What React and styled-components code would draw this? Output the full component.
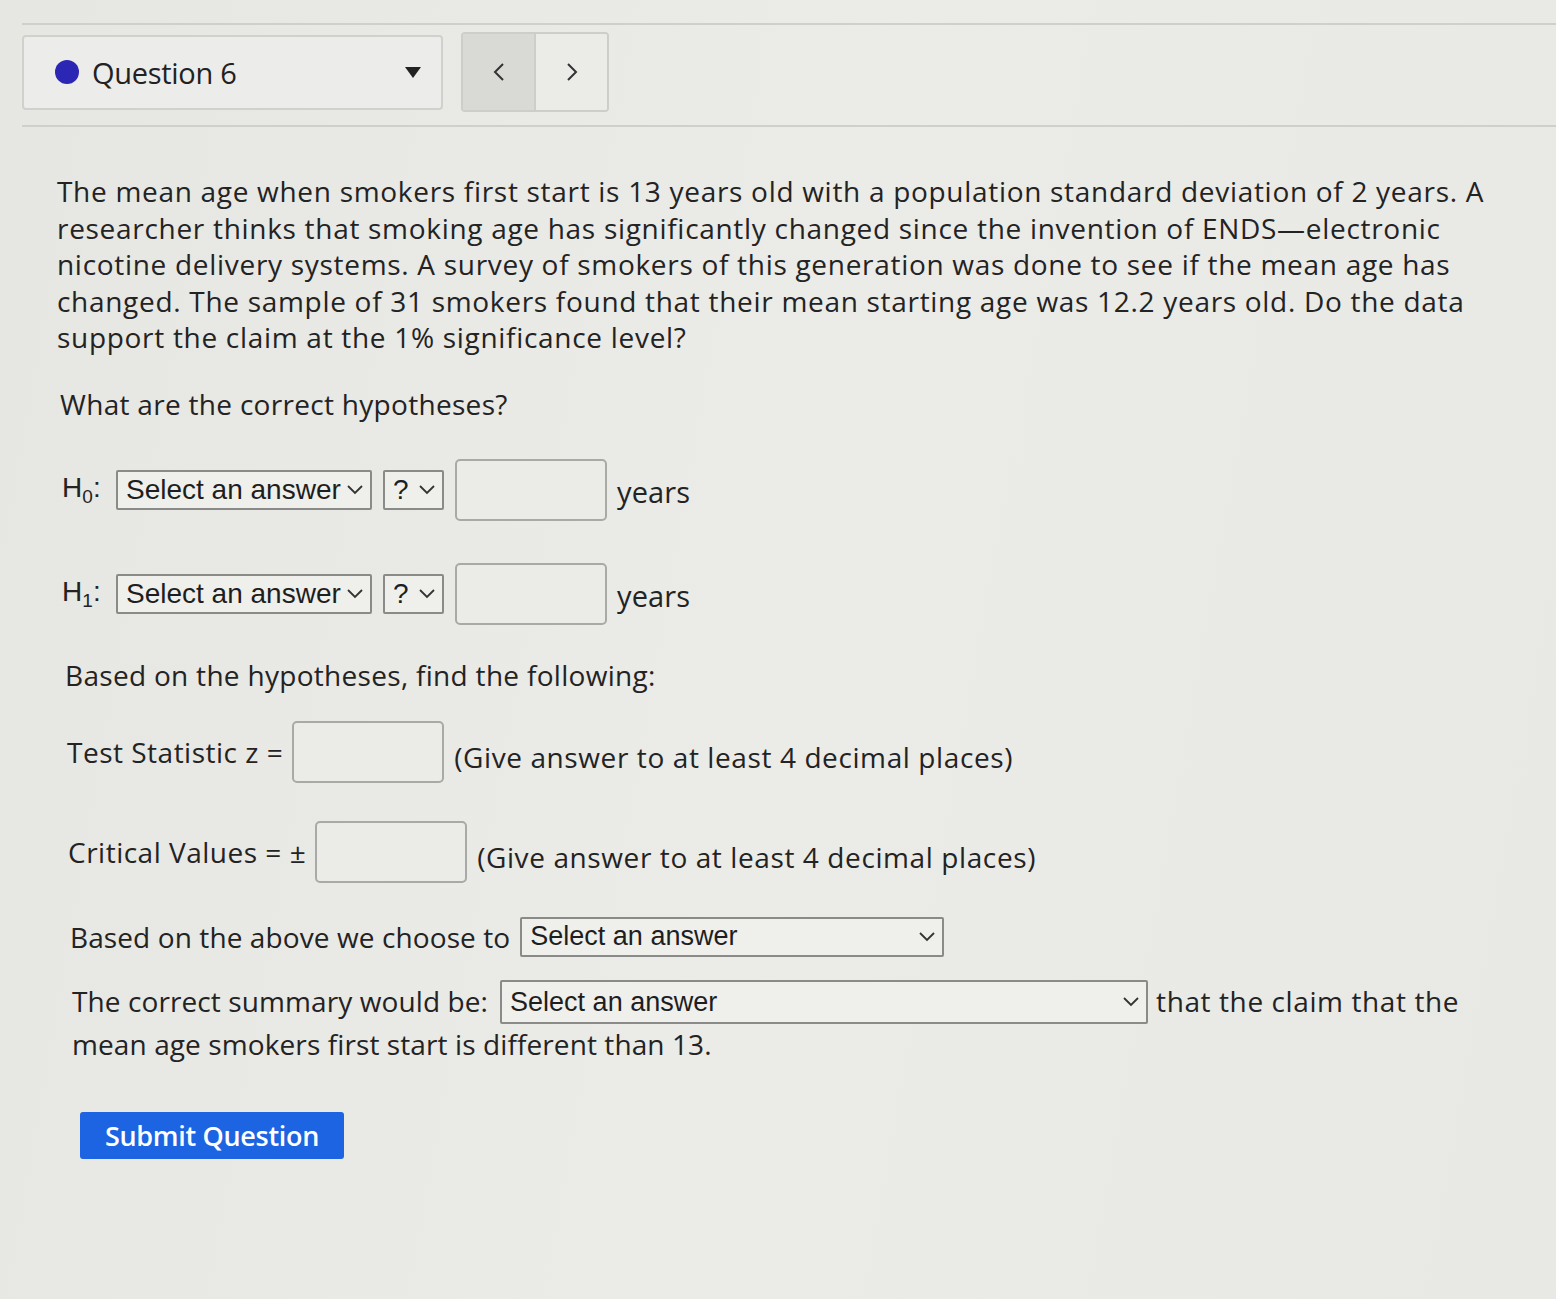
import React from "react";
import styled, { createGlobalStyle } from "styled-components";

const Global = createGlobalStyle`
  html, body { margin: 0; padding: 0; background: #e9e9e6; }
  body { font-family: "Open Sans", Lato, sans-serif; color: #232323; }
`;

const Page = styled.div`
  width: 1556px;
  min-height: 1299px;
  box-sizing: border-box;
  padding-top: 23px;
  background: linear-gradient(100deg, #e6e6e3 0%, #ebebe8 50%, #e8e8e5 100%);
`;

const HeaderBar = styled.div`
  margin-left: 22px;
  border-top: 2px solid #cfcfcc;
  border-bottom: 2px solid #cfcfcc;
  padding: 7px 0 13px;
  display: flex;
  align-items: center;
  gap: 18px;
`;

const QuestionSelect = styled.div`
  width: 421px;
  height: 75px;
  box-sizing: border-box;
  border: 2px solid #d0d0cd;
  border-radius: 4px;
  background: #ececea;
  display: flex;
  align-items: center;
  padding: 0 20px 0 31px;
  font-size: 29px;
  letter-spacing: -0.3px;
  color: #222;
`;

const Dot = styled.span`
  width: 24px;
  height: 24px;
  border-radius: 50%;
  background: #2b26b3;
  margin-right: 13px;
`;

const Caret = styled.span`
  margin-left: auto;
  width: 0;
  height: 0;
  border-left: 8px solid transparent;
  border-right: 8px solid transparent;
  border-top: 11px solid #222;
`;

const Nav = styled.div`
  display: flex;
  height: 76px;
  border: 2px solid #cdcdca;
  border-radius: 4px;
  overflow: hidden;
`;

const NavButton = styled.div`
  width: 71px;
  display: flex;
  align-items: center;
  justify-content: center;
  background: ${(p) => (p.$dim ? "#d9d9d6" : "#ebebe8")};
  border-left: ${(p) => (p.$dim ? "none" : "2px solid #cdcdca")};
`;

const Content = styled.div`
  padding: 46px 0 0 57px;
  width: 1480px;
  font-size: 28px;
  letter-spacing: 0.1px;
`;

const Para = styled.p`
  margin: 0;
  line-height: 36.5px;
  white-space: nowrap;
  letter-spacing: 0.7px;
`;

const Prompt = styled.p`
  margin: 30px 0 0 3px;
  line-height: 36px;
  letter-spacing: 0.3px;
`;

const HypRow = styled.div`
  display: flex;
  align-items: center;
  margin: ${(p) => p.$mt}px 0 0 5px;
  height: 64px;
`;

const HLabel = styled.span`
  font-family: "Liberation Sans", Arial, sans-serif;
  font-size: 28px;
  width: 54px;
  sub { font-size: 19px; vertical-align: -6px; }
`;

const Select = styled.div`
  box-sizing: border-box;
  height: ${(p) => p.$h || 40}px;
  width: ${(p) => p.$w}px;
  border: 2px solid #8a8a88;
  border-radius: 2px;
  background: #efefec;
  font-family: "Liberation Sans", Arial, sans-serif;
  font-size: ${(p) => p.$fs || 28}px;
  letter-spacing: 0;
  color: #1e1e1e;
  display: flex;
  align-items: center;
  padding: 0 6px 0 8px;
  margin-right: 11px;
  white-space: nowrap;
  span { flex: 1; }
`;

const Chev = () => (
  <svg width="18" height="12" viewBox="0 0 18 12">
    <path d="M2 2 L9 9 L16 2" fill="none" stroke="#333" strokeWidth="1.8" />
  </svg>
);

const Input = styled.div`
  box-sizing: border-box;
  width: 152px;
  height: 62px;
  border: 2px solid #a9a9a6;
  border-radius: 5px;
  background: #ebebe8;
  margin-right: ${(p) => p.$mr ?? 10}px;
`;

const Unit = styled.span`
  font-size: 29px;
  margin-top: 4px;
`;

const SubHead = styled.p`
  margin: 31px 0 0 8px;
  line-height: 36px;
  letter-spacing: 0.3px;
`;

const FieldRow = styled.div`
  display: flex;
  align-items: center;
  margin: ${(p) => p.$mt}px 0 0 ${(p) => p.$ml}px;
  height: 62px;
`;

const FieldLabel = styled.span`
  margin-right: 9px;
  letter-spacing: 0.5px;
`;

const Hint = styled.span`
  margin-top: 10px;
  font-size: 28px;
  letter-spacing: 0.6px;
`;

const ChooseRow = styled.div`
  display: flex;
  align-items: center;
  margin: 34px 0 0 13px;
  span.l { margin-right: 10px; }
`;

const Summary = styled.div`
  margin: 24px 0 0 15px;
  line-height: 40px;
  width: 1440px;
`;

const Tail = styled.span`
  letter-spacing: 0.6px;
`;

const InlineSelect = styled(Select)`
  display: inline-flex;
  vertical-align: middle;
  margin: -4px 8px 0 12px;
  width: 648px;
  height: 44px;
  font-size: 27px;
`;

const Submit = styled.button`
  margin: 48px 0 0 23px;
  width: 264px;
  height: 47px;
  border: none;
  border-radius: 3px;
  background: #1c64e2;
  color: #fff;
  font-family: "Open Sans", sans-serif;
  font-size: 27px;
  font-weight: 600;
  letter-spacing: -0.3px;
  padding: 0;
`;

export default function App() {
  return (
    <>
      <Global />
      <Page>
        <HeaderBar>
          <QuestionSelect>
            <Dot />
            Question 6
            <Caret />
          </QuestionSelect>
          <Nav>
            <NavButton $dim>
              <svg width="16" height="22" viewBox="0 0 16 22">
                <path d="M12 3 L4 11 L12 19" fill="none" stroke="#333" strokeWidth="2" />
              </svg>
            </NavButton>
            <NavButton>
              <svg width="16" height="22" viewBox="0 0 16 22">
                <path d="M4 3 L12 11 L4 19" fill="none" stroke="#333" strokeWidth="2" />
              </svg>
            </NavButton>
          </Nav>
        </HeaderBar>
        <Content>
          <Para>
            The mean age when smokers first start is 13 years old with a population standard deviation of 2 years. A
            <br />
            researcher thinks that smoking age has significantly changed since the invention of ENDS—electronic
            <br />
            nicotine delivery systems. A survey of smokers of this generation was done to see if the mean age has
            <br />
            changed. The sample of 31 smokers found that their mean starting age was 12.2 years old. Do the data
            <br />
            support the claim at the 1% significance level?
          </Para>
          <Prompt>What are the correct hypotheses?</Prompt>
          <HypRow $mt={36}>
            <HLabel>
              H<sub>0</sub>:
            </HLabel>
            <Select $w={256}>
              <span>Select an answer</span>
              <Chev />
            </Select>
            <Select $w={61}>
              <span>?</span>
              <Chev />
            </Select>
            <Input />
            <Unit>years</Unit>
          </HypRow>
          <HypRow $mt={40}>
            <HLabel>
              H<sub>1</sub>:
            </HLabel>
            <Select $w={256}>
              <span>Select an answer</span>
              <Chev />
            </Select>
            <Select $w={61}>
              <span>?</span>
              <Chev />
            </Select>
            <Input />
            <Unit>years</Unit>
          </HypRow>
          <SubHead>Based on the hypotheses, find the following:</SubHead>
          <FieldRow $mt={28} $ml={10}>
            <FieldLabel>Test Statistic z =</FieldLabel>
            <Input />
            <Hint>(Give answer to at least 4 decimal places)</Hint>
          </FieldRow>
          <FieldRow $mt={38} $ml={11}>
            <FieldLabel>Critical Values = ±</FieldLabel>
            <Input />
            <Hint>(Give answer to at least 4 decimal places)</Hint>
          </FieldRow>
          <ChooseRow>
            <span className="l">Based on the above we choose to</span>
            <Select $w={424} $fs={27}>
              <span>Select an answer</span>
              <Chev />
            </Select>
          </ChooseRow>
          <Summary>
            The correct summary would be:
            <InlineSelect $w={648}>
              <span>Select an answer</span>
              <Chev />
            </InlineSelect>
            <Tail>that the claim that the</Tail>
            <br />
            mean age smokers first start is different than 13.
          </Summary>
          <Submit>Submit Question</Submit>
        </Content>
      </Page>
    </>
  );
}
